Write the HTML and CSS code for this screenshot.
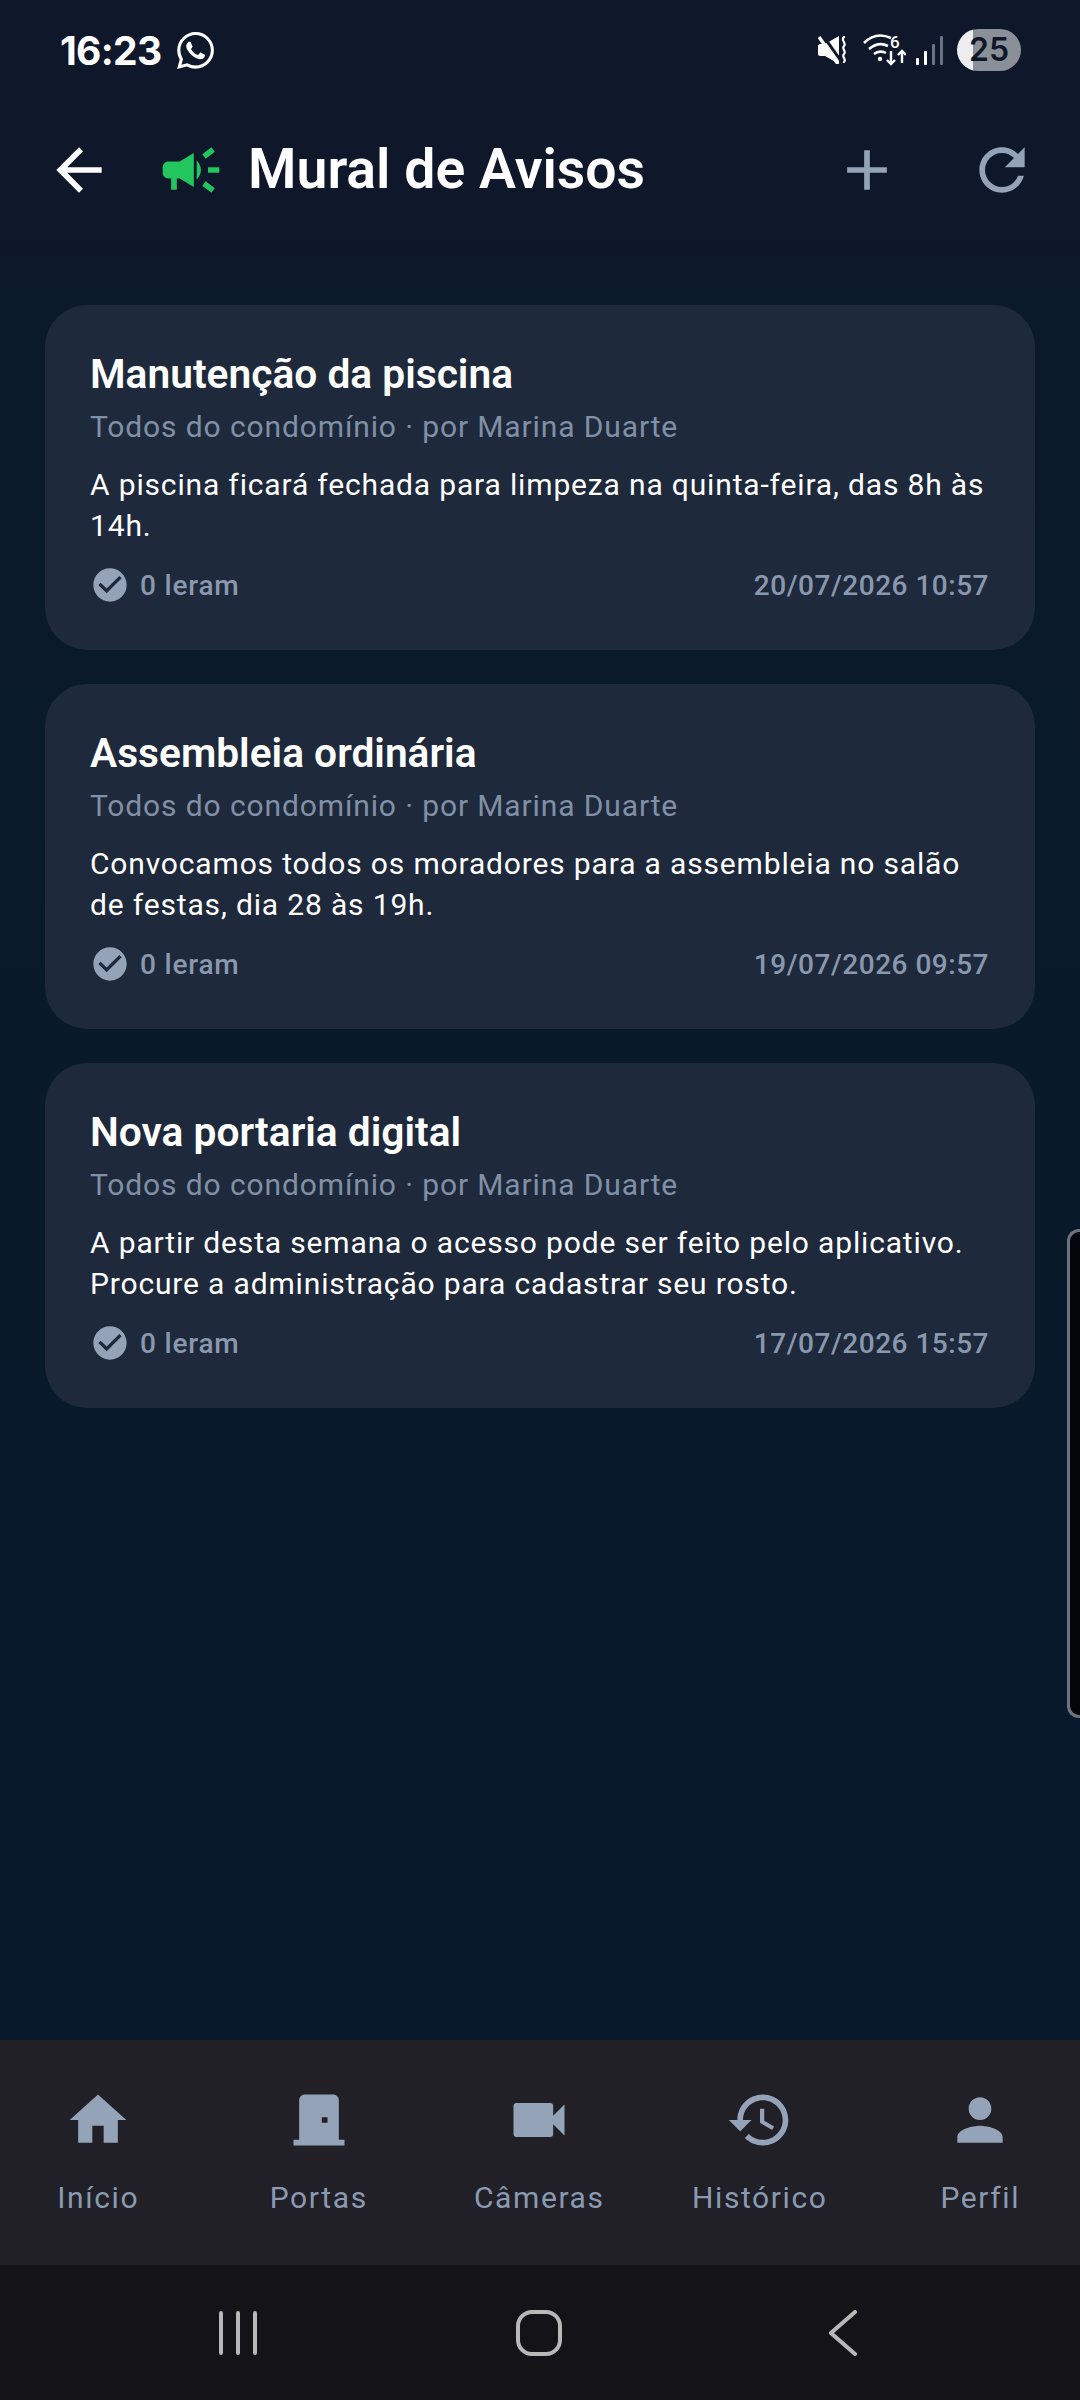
FILE: index.html

```html
<!DOCTYPE html>
<html lang="pt-BR">
<head>
  <meta charset="UTF-8">
  <meta name="viewport" content="width=device-width, initial-scale=1.0">
  <title>Mural de Avisos</title>
  <link rel="stylesheet" href="styles.css">
</head>
<body>

  <div class="status-bar">
    <div class="status-left">
      <span class="clock">16:23</span>
      <svg class="wa-icon" viewBox="0 0 24 24"><path d="M17.472 14.382c-.297-.149-1.758-.867-2.03-.967-.273-.099-.471-.148-.67.15-.197.297-.767.966-.94 1.164-.173.199-.347.223-.644.075-.297-.15-1.255-.463-2.39-1.475-.883-.788-1.48-1.761-1.653-2.059-.173-.297-.018-.458.13-.606.134-.133.298-.347.446-.52.149-.174.198-.298.298-.497.099-.198.05-.371-.025-.52-.075-.149-.669-1.612-.916-2.207-.242-.579-.487-.5-.669-.51-.173-.008-.371-.01-.57-.01-.198 0-.52.074-.792.372-.272.297-1.04 1.016-1.04 2.479 0 1.462 1.065 2.875 1.213 3.074.149.198 2.096 3.2 5.077 4.487.709.306 1.262.489 1.694.625.712.227 1.36.195 1.871.118.571-.085 1.758-.719 2.006-1.413.248-.694.248-1.289.173-1.413-.074-.124-.272-.198-.57-.347m-5.421 7.403h-.004a9.87 9.87 0 01-5.031-1.378l-.361-.214-3.741.982.998-3.648-.235-.374a9.86 9.86 0 01-1.51-5.26c.001-5.45 4.436-9.884 9.888-9.884 2.64 0 5.122 1.03 6.988 2.898a9.825 9.825 0 012.893 6.994c-.003 5.45-4.437 9.884-9.885 9.884m8.413-18.297A11.815 11.815 0 0012.05 0C5.495 0 .16 5.335.157 11.892c0 2.096.547 4.142 1.588 5.945L.057 24l6.305-1.654a11.882 11.882 0 005.683 1.448h.005c6.554 0 11.89-5.335 11.893-11.893a11.821 11.821 0 00-3.48-8.413Z"/></svg>
    </div>
    <div class="status-right">
      <svg class="st-mute" viewBox="0 0 29 28">
        <path d="M0 10c0-1 1-2 2-2h5L21 0v28L7 20H2c-1 0-2-1-2-2z" fill="#fff"/>
        <path d="M4 -2l19 27" stroke="#0f172a" stroke-width="3"/>
        <path d="M1 1l19 27" stroke="#fff" stroke-width="3.4"/>
        <path d="M26 1c-4 3 3 6 0 9-3 3 3 5 0 8-3 3 3 5 0 8" fill="none" stroke="#fff" stroke-width="2.2" stroke-linecap="round"/>
      </svg>
      <svg class="st-wifi" viewBox="0 -4 43 40">
        <path d="M1 9C9 1 19 0 28 4M6 15c6-5 13-6 19-3M11 20c4-3 9-3 12-1" fill="none" stroke="#fff" stroke-width="2.6"/>
        <circle cx="17" cy="25" r="2.2" fill="#fff"/>
        <text x="27" y="14" class="st-wifi-six">6</text>
        <path d="M28 17v13M24 26l4 4 4-4M39 29V17M35 21l4-4 4 4" fill="none" stroke="#fff" stroke-width="2.4"/>
      </svg>
      <svg class="st-signal" viewBox="0 0 27 29">
        <rect x="0" y="22" width="3" height="7" rx="1" fill="#fff"/>
        <rect x="8" y="15" width="3" height="14" rx="1" fill="#fff"/>
        <rect x="16" y="8" width="3" height="21" rx="1" fill="#6b7280"/>
        <rect x="24" y="0" width="3" height="29" rx="1" fill="#6b7280"/>
      </svg>
      <span class="battery">25</span>
    </div>
  </div>

  <header class="topbar">
    <svg class="icon icon-white" viewBox="0 0 24 24"><path d="M20 11H7.83l5.59-5.59L12 4l-8 8 8 8 1.41-1.41L7.83 13H20v-2z"/></svg>
    <svg class="icon icon-green" viewBox="0 0 24 24"><path d="M18 11v2h4v-2h-4zm-2 6.61c.96.71 2.21 1.65 3.2 2.39.4-.53.8-1.07 1.2-1.6-.99-.74-2.24-1.68-3.2-2.4-.4.54-.8 1.08-1.2 1.61zM20.4 5.6c-.4-.53-.8-1.07-1.2-1.6-.99.74-2.24 1.68-3.2 2.4.4.53.8 1.07 1.2 1.6.96-.72 2.21-1.65 3.2-2.4zM4 9c-1.1 0-2 .9-2 2v2c0 1.1.9 2 2 2h1v4h2v-4h1l5 3V6L8 9H4zm11.5 3c0-1.33-.58-2.53-1.5-3.35v6.69c.92-.81 1.5-2.01 1.5-3.34z"/></svg>
    <h1 class="page-title">Mural de Avisos</h1>
    <svg class="icon icon-muted" viewBox="0 0 24 24"><path d="M19 13h-6v6h-2v-6H5v-2h6V5h2v6h6v2z"/></svg>
    <svg class="icon icon-muted" viewBox="0 0 24 24"><path d="M17.65 6.35C16.2 4.9 14.21 4 12 4c-4.42 0-7.99 3.58-7.99 8s3.57 8 7.99 8c3.73 0 6.84-2.55 7.73-6h-2.08c-.82 2.33-3.04 4-5.65 4-3.31 0-6-2.69-6-6s2.69-6 6-6c1.66 0 3.14.69 4.22 1.78L13 11h7V4l-2.35 2.35z"/></svg>
  </header>

  <main class="feed">
    <article class="card">
      <h2 class="card-title">Manutenção da piscina</h2>
      <p class="card-sub">Todos do condomínio · por Marina Duarte</p>
      <p class="card-body">A piscina ficará fechada para limpeza na quinta-feira, das 8h às 14h.</p>
      <div class="card-meta">
        <svg class="check" viewBox="0 0 24 24"><path d="M12 2C6.48 2 2 6.48 2 12s4.48 10 10 10 10-4.48 10-10S17.52 2 12 2zm-2 15l-5-5 1.41-1.41L10 14.17l7.59-7.59L19 8l-9 9z"/></svg>
        <span class="reads">0 leram</span>
        <span class="date">20/07/2026 10:57</span>
      </div>
    </article>

    <article class="card">
      <h2 class="card-title">Assembleia ordinária</h2>
      <p class="card-sub">Todos do condomínio · por Marina Duarte</p>
      <p class="card-body">Convocamos todos os moradores para a assembleia no salão de festas, dia 28 às 19h.</p>
      <div class="card-meta">
        <svg class="check" viewBox="0 0 24 24"><path d="M12 2C6.48 2 2 6.48 2 12s4.48 10 10 10 10-4.48 10-10S17.52 2 12 2zm-2 15l-5-5 1.41-1.41L10 14.17l7.59-7.59L19 8l-9 9z"/></svg>
        <span class="reads">0 leram</span>
        <span class="date">19/07/2026 09:57</span>
      </div>
    </article>

    <article class="card">
      <h2 class="card-title">Nova portaria digital</h2>
      <p class="card-sub">Todos do condomínio · por Marina Duarte</p>
      <p class="card-body">A partir desta semana o acesso pode ser feito pelo aplicativo. Procure a administração para cadastrar seu rosto.</p>
      <div class="card-meta">
        <svg class="check" viewBox="0 0 24 24"><path d="M12 2C6.48 2 2 6.48 2 12s4.48 10 10 10 10-4.48 10-10S17.52 2 12 2zm-2 15l-5-5 1.41-1.41L10 14.17l7.59-7.59L19 8l-9 9z"/></svg>
        <span class="reads">0 leram</span>
        <span class="date">17/07/2026 15:57</span>
      </div>
    </article>
  </main>

  <div class="edge-handle"></div>

  <nav class="tabbar">
    <div class="tab">
      <svg class="icon" viewBox="0 0 24 24"><path d="M10 20v-6h4v6h5v-8h3L12 3 2 12h3v8z"/></svg>
      <span>Início</span>
    </div>
    <div class="tab">
      <svg class="icon" viewBox="0 0 24 24"><path fill-rule="evenodd" d="M19 19V5c0-1.1-.9-2-2-2H7c-1.1 0-2 .9-2 2v14H3v2h18v-2h-2zm-4-6h-2v-2h2v2z"/></svg>
      <span>Portas</span>
    </div>
    <div class="tab">
      <svg class="icon" viewBox="0 0 24 24"><path d="M17 10.5V7c0-.55-.45-1-1-1H4c-.55 0-1 .45-1 1v10c0 .55.45 1 1 1h12c.55 0 1-.45 1-1v-3.5l4 4v-11l-4 4z"/></svg>
      <span>Câmeras</span>
    </div>
    <div class="tab">
      <svg class="icon" viewBox="0 0 24 24"><path d="M13 3c-4.97 0-9 4.03-9 9H1l3.89 3.89.07.14L9 12H6c0-3.87 3.13-7 7-7s7 3.13 7 7-3.13 7-7 7c-1.93 0-3.68-.79-4.94-2.06l-1.42 1.42C8.27 19.99 10.51 21 13 21c4.97 0 9-4.03 9-9s-4.03-9-9-9zm-1 5v5l4.28 2.54.72-1.21-3.5-2.08V8H12z"/></svg>
      <span>Histórico</span>
    </div>
    <div class="tab">
      <svg class="icon" viewBox="0 0 24 24"><path d="M12 12c2.21 0 4-1.79 4-4s-1.79-4-4-4-4 1.79-4 4 1.79 4 4 4zm0 2c-2.67 0-8 1.34-8 4v2h16v-2c0-2.66-5.33-4-8-4z"/></svg>
      <span>Perfil</span>
    </div>
  </nav>

  <div class="sysnav">
    <svg class="sys-recents" viewBox="0 0 40 44"><path d="M3 2v40M20 2v40M37 2v40"/></svg>
    <svg class="sys-home" viewBox="0 0 46 46"><rect x="2" y="2" width="42" height="42" rx="14"/></svg>
    <svg class="sys-back" viewBox="0 0 28 46"><path d="M26 2L2 23l24 21"/></svg>
  </div>

</body>
</html>
```

FILE: styles.css

```css
* {
  box-sizing: border-box;
}
html, body {
  margin: 0;
  padding: 0;
}
body {
  position: relative;
  width: 1080px;
  height: 2400px;
  display: flex;
  flex-direction: column;
  font-family: Roboto, sans-serif;
  color: #fff;
  background: linear-gradient(#0f172a 0, #0f172a 240px, #0a1a2a 300px, #06192b 100%);
  overflow: hidden;
}

/* status bar */
.status-bar {
  height: 100px;
  display: flex;
  align-items: center;
  justify-content: space-between;
  padding: 0 59px 0 60px;
}
.status-left, .status-right {
  display: flex;
  align-items: center;
}
.clock {
  font-family: Inter, sans-serif;
  font-size: 39px;
  font-weight: 700;
  letter-spacing: -0.7px;
}
.wa-icon {
  width: 37px;
  height: 37px;
  margin-left: 16px;
  fill: #fff;
}
.st-mute {
  width: 29px;
  height: 28px;
}
.st-wifi {
  width: 43px;
  height: 40px;
  margin-left: 16px;
}
.st-wifi-six {
  font-family: Roboto, sans-serif;
  font-size: 17px;
  font-weight: 500;
  fill: #fff;
}
.st-signal {
  width: 27px;
  height: 29px;
  margin-left: 10px;
}
.battery {
  width: 64px;
  height: 42px;
  margin-left: 14px;
  border-radius: 21px;
  background: linear-gradient(90deg, #eceef0 16px, #8b8f98 16px);
  color: #0f172a;
  font-family: Inter, sans-serif;
  font-size: 32px;
  font-weight: 600;
  line-height: 42px;
  text-align: center;
}

/* header */
.topbar {
  height: 140px;
  display: flex;
  align-items: center;
  padding: 0 44px 0 45px;
}
.icon {
  width: 68px;
  height: 68px;
  flex: none;
  fill: #94a3b8;
}
.icon-white {
  fill: #fff;
}
.icon-green {
  fill: #22c55e;
  margin-left: 44px;
}
.icon-muted {
  fill: #94a3b8;
}
.icon-muted:last-child {
  margin-left: 67px;
}
.page-title {
  flex: 1;
  margin: 0 0 2px 23px;
  font-size: 55.4px;
  font-weight: 600;
}

/* cards */
.feed {
  flex: 1;
  display: flex;
  flex-direction: column;
  gap: 34px;
  padding: 65px 45px 0;
}
.card {
  height: 345px;
  padding: 43px 45px 0;
  background: #1e293b;
  border-radius: 42px;
}
.card-title {
  margin: 0;
  font-size: 40.7px;
  font-weight: 600;
  line-height: 52px;
}
.card-sub {
  margin: 7px 0 0;
  font-size: 30px;
  line-height: 40px;
  letter-spacing: 0.88px;
  color: #8090a6;
}
.card-body {
  margin: 17px 0 0;
  font-size: 30px;
  line-height: 41px;
  letter-spacing: 0.84px;
  color: #fff;
}
.card-meta {
  display: flex;
  align-items: center;
  margin-top: 19px;
  height: 40px;
  font-size: 28px;
  letter-spacing: 0.5px;
  color: #8998ae;
}
.check {
  width: 40px;
  height: 40px;
  flex: none;
  fill: #94a3b8;
}
.reads {
  flex: 1;
  margin-left: 10px;
  font-weight: 500;
  letter-spacing: 0.8px;
}
.date {
  margin-right: 1px;
  font-weight: 500;
}

/* samsung edge panel */
.edge-handle {
  position: absolute;
  top: 1229px;
  right: 0;
  width: 13px;
  height: 489px;
  background: #030608;
  border: 3px solid #6b7280;
  border-right: none;
  border-radius: 12px 0 0 12px;
}

/* bottom tabs */
.tabbar {
  height: 225px;
  display: grid;
  grid-template-columns: repeat(5, 220.5px);
  background: #212027;
}
.tab {
  display: flex;
  flex-direction: column;
  align-items: center;
  margin: 0 12px 0 -12px;
  padding-top: 46px;
  font-size: 30px;
  letter-spacing: 1.6px;
  color: #8a9ab2;
}
.tab span {
  margin-top: 26px;
}

/* android nav */
.sysnav {
  height: 135px;
  display: flex;
  align-items: center;
  background: #141418;
}
.sysnav svg {
  fill: none;
  stroke: #b8b8b8;
  stroke-width: 4;
  stroke-linecap: round;
}
.sys-recents {
  width: 40px;
  height: 44px;
  margin-left: 218px;
}
.sys-home {
  width: 46px;
  height: 46px;
  margin-left: 258px;
}
.sys-back {
  width: 28px;
  height: 46px;
  margin-left: 267px;
}
```
